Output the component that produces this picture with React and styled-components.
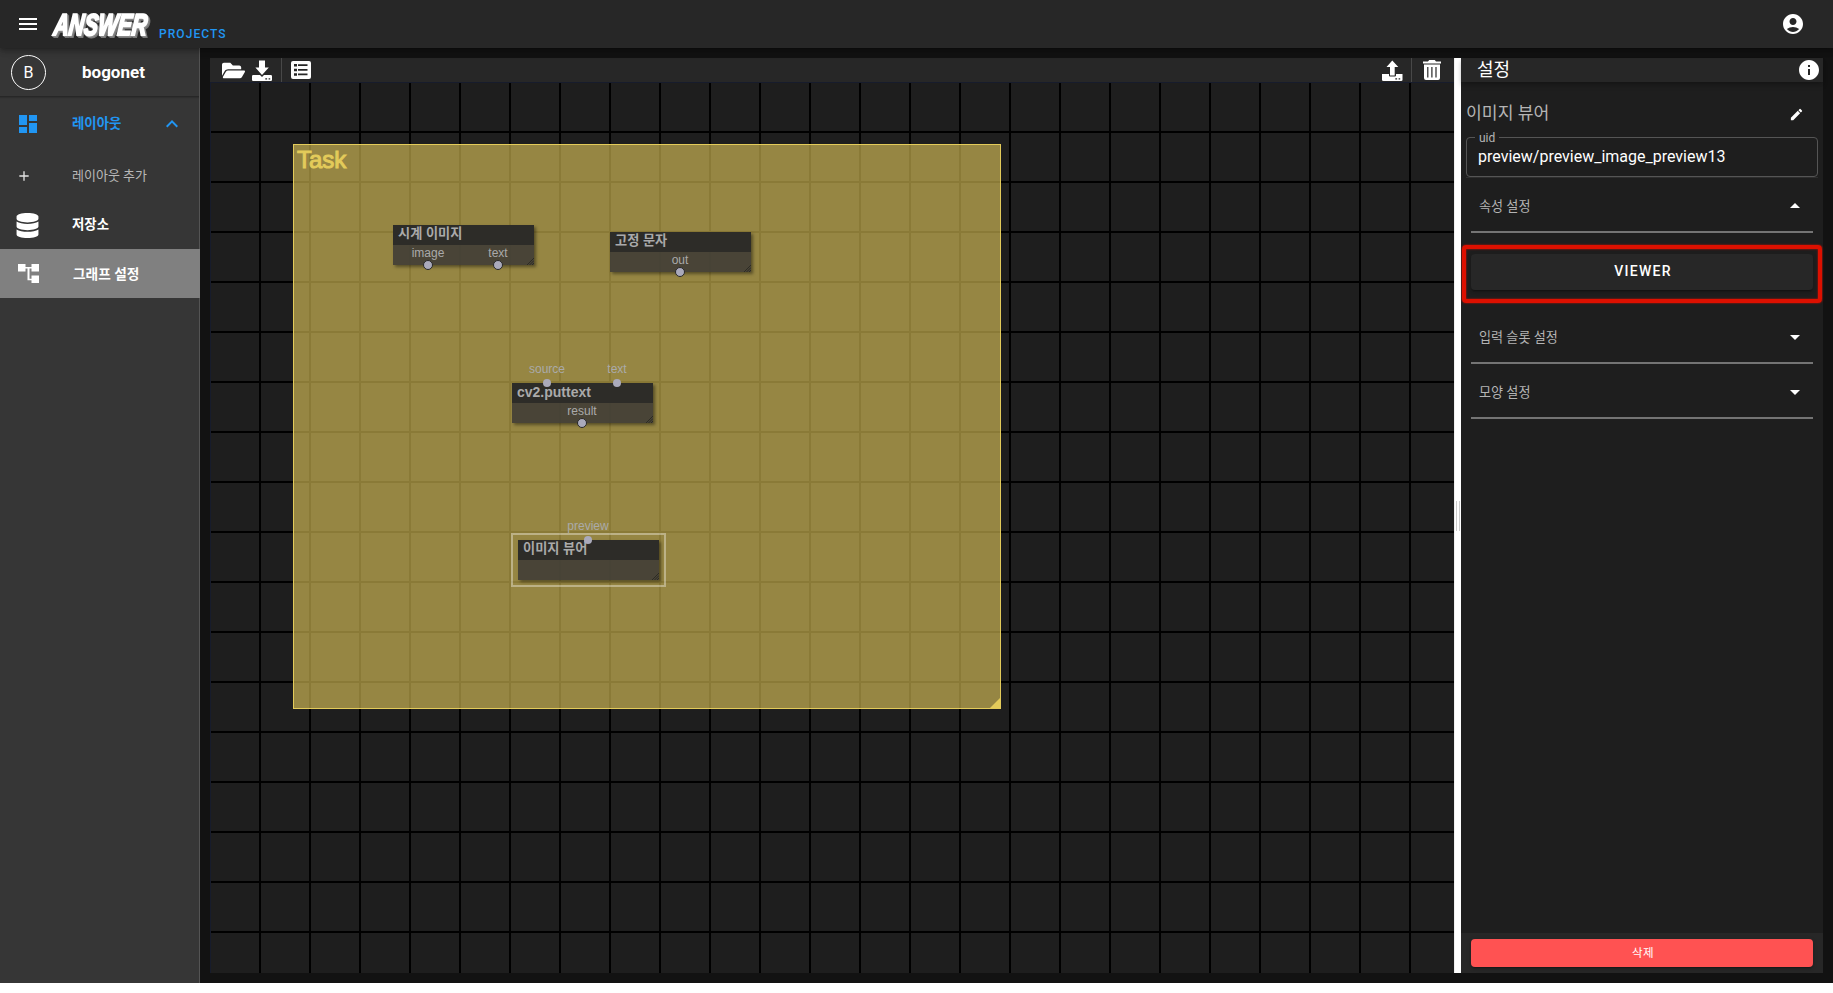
import React from "react";
import styled, { createGlobalStyle, css } from "styled-components";
import {
  MdMenu, MdDashboard, MdKeyboardArrowUp, MdAdd, MdAccountCircle, MdEdit,
  MdArrowDropDown, MdArrowDropUp, MdInfo,
} from "react-icons/md";
import { FaFolderOpen, FaDatabase } from "react-icons/fa";

const Global = createGlobalStyle`
  * { box-sizing: border-box; }
  body { margin: 0; background: #fff; overflow: hidden; color: #fff;
    font-family: Roboto, "Noto Sans CJK KR", sans-serif; }
  svg { display: block; flex: none; }
`;

const Page = styled.div`
  display: flex;
  flex-direction: column;
  height: 983px;
  background: #121212;
`;
const Header = styled.header`
  flex: none;
  height: 48px;
  padding: 0 28px 0 16px;
  display: flex;
  align-items: center;
  background: #272727;
  position: relative;
  z-index: 1;
  box-shadow: 0 2px 4px -1px rgba(0,0,0,.2), 0 4px 5px rgba(0,0,0,.14), 0 1px 10px rgba(0,0,0,.12);
`;
const Logo = styled.svg`
  margin-left: 8px;
  overflow: visible;
  filter: drop-shadow(1px 1px 0 #888) drop-shadow(1px 1px 0 #777);
`;
const Projects = styled.span`
  margin: 19px auto 0 6px;
  font-size: 12px;
  font-weight: 500;
  line-height: 16px;
  letter-spacing: 1.07px;
  color: #2196f3;
`;
const Body = styled.div`
  flex: 1;
  display: flex;
  min-height: 0;
`;
const Sidebar = styled.nav`
  width: 200px;
  flex: none;
  background: #363636;
  border-right: 1px solid #545454;
`;
const User = styled.div`
  height: 49px;
  padding-left: 11px;
  display: flex;
  align-items: center;
  border-bottom: 1px solid #272727;
  box-shadow: 0 1px 1px rgba(0,0,0,.14);
`;
const Avatar = styled.div`
  width: 35px;
  height: 35px;
  border: 1px solid #fff;
  border-radius: 50%;
  display: flex;
  align-items: center;
  justify-content: center;
  font-size: 16px;
`;
const UserName = styled.div`
  margin-left: 36px;
  font-size: 17px;
  font-weight: 700;
`;
const Item = styled.div`
  height: ${(p) => p.$height}px;
  width: 200px;
  padding-right: 16px;
  display: flex;
  align-items: center;
  color: ${(p) => p.$color || "#fff"};
  background: ${(p) => (p.$active ? "#808080" : "transparent")};
  font-size: ${(p) => p.$size || 13.4}px;
  font-weight: ${(p) => p.$weight || 700};
`;
const ItemIcon = styled.div`
  width: ${(p) => p.$width || 72}px;
  padding-left: ${(p) => p.$inset}px;
  color: ${(p) => p.$color || "inherit"};
`;
const ItemText = styled.span`
  flex: 1;
  line-height: 20px;
`;
const Workspace = styled.main`
  flex: 1;
  display: flex;
  min-width: 0;
  padding: 10px;
`;
const Editor = styled.section`
  flex: 1;
  display: flex;
  flex-direction: column;
  min-width: 0;
`;
const Toolbar = styled.div`
  height: 24px;
  flex: none;
  display: flex;
  align-items: center;
  padding: 0 13px 0 12px;
  background: #272727;
`;
const Divider = styled.i`
  width: 1px;
  height: 24px;
  background: #484848;
  margin: 0 ${(p) => p.$right}px 0 ${(p) => p.$left}px;
`;
const Gap = styled.i`
  flex: ${(p) => (p.$size ? "none" : 1)};
  width: ${(p) => p.$size || 0}px;
`;
const Canvas = styled.div`
  flex: 1;
  position: relative;
  overflow: hidden;
  border-top: 1px solid #171c2c;
  border-left: 1px solid #171c2c;
  background-color: #1e1e1e;
  background-image: linear-gradient(90deg, transparent 48px, #000 48px),
    linear-gradient(transparent 48px, #000 48px);
  background-size: 50px 50px;
  font-family: "Liberation Sans", "Noto Sans CJK KR", sans-serif;
`;
const Group = styled.div`
  position: absolute;
  left: 82px;
  top: 61px;
  width: 708px;
  height: 565px;
  padding: 1px 3px;
  border: 1px solid #e3cb5a;
  background: rgba(230, 203, 92, .6);
  color: #e3cb5a;
  font-size: 24px;
  line-height: 28px;
  -webkit-text-stroke: 1px #e3cb5a;
`;
const GroupCorner = styled.svg`
  position: absolute;
  right: 0;
  bottom: 0;
`;
const NodeBox = styled.div`
  position: absolute;
  left: ${(p) => p.$x - 211}px;
  top: ${(p) => p.$y - 83}px;
  width: 141px;
  height: 40px;
  color: #aaa;
  background: rgba(58, 56, 54, .84);
  box-shadow: 2px 2px 3px rgba(0,0,0,.42);
  ${(p) => p.$selected && css`
    outline: 2px solid rgba(255, 255, 255, .36);
    outline-offset: 5px;
  `}
`;
const NodeTitle = styled.div`
  height: 20px;
  padding-left: 5px;
  background: #2d2c28;
  font-size: ${(p) => p.$size}px;
  font-weight: 700;
  line-height: ${(p) => (p.$size < 14 ? 17 : 18)}px;
  white-space: nowrap;
`;
const Slot = styled.div`
  position: absolute;
  left: ${(p) => p.$x - 35}px;
  top: ${(p) => (p.$input ? -22 : 20)}px;
  width: 70px;
  text-align: center;
  font-size: 12px;
  line-height: 16px;
`;
const Port = styled.i`
  position: absolute;
  left: ${(p) => (p.$input ? 31 : 30)}px;
  top: ${(p) => (p.$input ? 18 : 15)}px;
  width: ${(p) => (p.$input ? 8 : 10)}px;
  height: ${(p) => (p.$input ? 8 : 10)}px;
  border-radius: 50%;
  background: #aaaabb;
  ${(p) => !p.$input && css`border: 1px solid #282828;`}
`;
const Grip = styled.svg`
  position: absolute;
  right: 0;
  bottom: 0;
`;
const Splitter = styled.div`
  width: 7px;
  flex: none;
  background: #fff;
  border-left: 1px solid #eee;
  display: flex;
  align-items: center;
  padding-left: 1px;
`;
const SplitHandle = styled.div`
  width: 4px;
  height: 30px;
  border: 1px solid #ccc;
  border-width: 0 1px;
`;
const Panel = styled.aside`
  width: 362px;
  flex: none;
  display: flex;
  flex-direction: column;
  background: #1e1e1e;
`;
const PanelHead = styled.div`
  height: 24px;
  flex: none;
  padding: 0 2px 0 16px;
  display: flex;
  align-items: center;
  justify-content: space-between;
  background: #272727;
  font-size: 18px;
  line-height: 24px;
  box-shadow: 0 2px 4px -1px rgba(0,0,0,.2), 0 4px 5px rgba(0,0,0,.14);
`;
const NameRow = styled.div`
  height: 30px;
  margin: 16px 0 3px;
  padding: 0 19px 0 5px;
  display: flex;
  align-items: center;
  justify-content: space-between;
  color: #b4b4b4;
  font-size: 17.2px;
  line-height: 26px;
  & svg { color: #fff; margin-top: 3px; }
`;
const Field = styled.fieldset`
  width: 352px;
  height: 46px;
  margin: 0 0 0 5px;
  padding: 2px 11px 0;
  border: 1px solid #555;
  border-radius: 4px;
  font-size: 16px;
  line-height: 24px;
  & legend {
    height: 12px;
    margin-left: -3px;
    padding: 0 4px;
    color: #b4b4b4;
    font-size: 12px;
    line-height: 15px;
  }
`;
const FieldShade = styled.div`
  height: 1px;
  margin: 0 5px;
  background: #2e2e2e;
`;
const Section = styled.div`
  height: 55px;
  margin: ${(p) => p.$top || 0}px 10px 0;
  padding: 1px 6px 0 8px;
  flex: none;
  display: flex;
  align-items: center;
  justify-content: space-between;
  border-bottom: 2px solid #747474;
  color: #b4b4b4;
  font-size: 13.1px;
  & svg { color: #fff; margin-top: 1px; }
`;
const Highlight = styled.div`
  width: 360px;
  height: 58px;
  flex: none;
  margin: 12px 0 0 1px;
  padding: 5px;
  border: 4px solid #dd1000;
  border-radius: 4px;
  box-shadow: 0 0 2px #dd1000, inset 0 0 2px #dd1000;
`;
const Button = styled.div`
  height: ${(p) => p.$height}px;
  padding: 0 0 2px 2px;
  display: flex;
  align-items: center;
  justify-content: center;
  border-radius: 4px;
  background: ${(p) => p.$fill};
  box-shadow: 0 3px 1px -2px rgba(0,0,0,.2), 0 2px 2px rgba(0,0,0,.14), 0 1px 5px rgba(0,0,0,.12);
  font-size: ${(p) => p.$size}px;
  font-weight: ${(p) => p.$weight};
  letter-spacing: ${(p) => p.$spacing}px;
`;
const Footer = styled.div`
  margin-top: auto;
  padding: 6px 10px;
  height: 40px;
  background: #272727;
`;

const TransferIcon = ({ up }) => (
  <svg width="21" height="21" viewBox="0 0 21 21" fill="#fff">
    {up ? <path d="M10.3 .5L16.3 7H12.7V15.5H8V7H4.5Z" />
      : <path d="M7 .5H13V7.5H16.8L10 15L3.4 7.5H7Z" />}
    <path d={up ? "M0 14H7V15.5Q7 16.5 8 16.5H13Q14 16.5 14 15.5V14H20.5V20Q20.5 21 19 21H1.5Q0 21 0 20Z"
      : "M1.2 15H8L10 17L12 15H18.8Q20 15 20 16.2V20Q20 21 18.8 21H1.2Q0 21 0 20V16.2Q0 15 1.2 15Z"} />
    <path fill="#272727" d="M13.3 18.3h1.8v1.3h-1.8zM16.6 18.3h1.6v1.3h-1.6z" />
  </svg>
);
const ListIcon = () => (
  <svg width="20" height="18" viewBox="0 0 20 18">
    <rect width="20" height="18" rx="2" fill="#fff" />
    <path fill="#272727" d="M3 3h3v2.5H3zM7 3.3h9.5v1.7H7zM3 7.7h3v2.5H3zM7 8h9.5v1.7H7zM3 12.3h3v2.5H3zM7 12.6h9.5v1.7H7z" />
  </svg>
);
const TrashIcon = () => (
  <svg width="18" height="20" viewBox="0 0 18 20" fill="#fff">
    <path fillRule="evenodd" d="M0 1.5H5L6.2 0H11.8L13 1.5H18V3.5H0ZM1 4.5H17V18Q17 20 15 20H3Q1 20 1 18ZM4.2 7V17.5H5.4V7ZM8.3 7V17.5H9.5V7ZM12.4 7V17.5H13.6V7Z" />
  </svg>
);
const TreeIcon = () => (
  <svg width="21" height="19" viewBox="0 0 21 19" fill="#fff">
    <path d="M0 0h7.5v7.5H0zM13.5 0H21v7.5h-7.5zM13.5 11.5H21V19h-7.5zM7 3h7v1.5h-2.5v10.3H14v1.4H9.5V4.5H7z" />
  </svg>
);

const nodes = [
  { title: "시계 이미지", x: 393, y: 225, size: 13.2, slots: [{ label: "image", x: 35 }, { label: "text", x: 105 }] },
  { title: "고정 문자", x: 610, y: 232, size: 13.2, slots: [{ label: "out", x: 70 }] },
  { title: "cv2.puttext", x: 512, y: 383, size: 14, slots: [
    { label: "source", x: 35, input: true }, { label: "text", x: 105, input: true }, { label: "result", x: 70 }] },
  { title: "이미지 뷰어", x: 518, y: 540, size: 13.2, selected: true, slots: [{ label: "preview", x: 70, input: true }] },
];

const GraphNode = ({ node }) => (
  <NodeBox $x={node.x} $y={node.y} $selected={node.selected}>
    <NodeTitle $size={node.size}>{node.title}</NodeTitle>
    {node.slots.map((s) => (
      <Slot key={s.label} $x={s.x} $input={s.input}>{s.label}<Port $input={s.input} /></Slot>
    ))}
    <Grip width="8" height="8" viewBox="0 0 8 8" stroke="#25251f" strokeWidth=".8">
      <path d="M1 8L8 1M3.5 8L8 3.5M6 8L8 6" />
    </Grip>
  </NodeBox>
);

export default function App() {
  return (
    <Page>
      <Global />
      <Header>
        <MdMenu size={24} />
        <Logo width="105" height="34" viewBox="0 0 105 34">
          <text
            x="5" y="28.5" transform="translate(3 0) skewX(-6)"
            textLength="93" lengthAdjust="spacingAndGlyphs"
            fontFamily="Liberation Sans Narrow, Liberation Sans, sans-serif"
            fontWeight="700" fontStyle="italic" fontSize="30"
            fill="#fff" stroke="#fff" strokeWidth="2.2"
          >ANSWER</text>
        </Logo>
        <Projects>PROJECTS</Projects>
        <MdAccountCircle size={24} />
      </Header>
      <Body>
        <Sidebar>
          <User><Avatar>B</Avatar><UserName>bogonet</UserName></User>
          <Item $height={53} $color="#2196f3">
            <ItemIcon $inset={16}><MdDashboard size={24} /></ItemIcon>
            <ItemText>레이아웃</ItemText>
            <MdKeyboardArrowUp size={24} />
          </Item>
          <Item $height={51} $color="#b8b8b8" $weight={400} $size={13}>
            <ItemIcon $inset={16} $color="#e4e4e4"><MdAdd size={16} /></ItemIcon>
            <ItemText>레이아웃 추가</ItemText>
          </Item>
          <Item $height={48}>
            <ItemIcon $inset={14.5}><FaDatabase size={25} /></ItemIcon>
            <ItemText>저장소</ItemText>
          </Item>
          <Item $height={49} $active $size={13.7}>
            <ItemIcon $inset={18} $width={73}><TreeIcon /></ItemIcon>
            <ItemText>그래프 설정</ItemText>
          </Item>
        </Sidebar>
        <Workspace>
          <Editor>
            <Toolbar>
              <FaFolderOpen size={23} /><Gap $size={7} /><TransferIcon />
              <Divider $left={8} $right={9} /><ListIcon /><Gap />
              <TransferIcon up /><Divider $left={8} $right={11} /><TrashIcon />
            </Toolbar>
            <Canvas>
              <Group>
                Task
                <GroupCorner width="10" height="10"><path d="M10 0V10H0Z" fill="#e3cb5a" /></GroupCorner>
              </Group>
              {nodes.map((n) => <GraphNode key={n.title} node={n} />)}
            </Canvas>
          </Editor>
          <Splitter><SplitHandle /></Splitter>
          <Panel>
            <PanelHead>설정<MdInfo size={24} /></PanelHead>
            <NameRow>이미지 뷰어<MdEdit size={15} /></NameRow>
            <Field><legend>uid</legend>preview/preview_image_preview13</Field>
            <FieldShade />
            <Section>속성 설정<MdArrowDropUp size={24} /></Section>
            <Highlight><Button $height={36} $fill="#272727" $size={14} $weight={500} $spacing={1.25}>VIEWER</Button></Highlight>
            <Section $top={6}>입력 슬롯 설정<MdArrowDropDown size={24} /></Section>
            <Section>모양 설정<MdArrowDropDown size={24} /></Section>
            <Footer><Button $height={28} $fill="#ff5252" $size={11.5} $weight={400} $spacing={.5}>삭제</Button></Footer>
          </Panel>
        </Workspace>
      </Body>
    </Page>
  );
}
